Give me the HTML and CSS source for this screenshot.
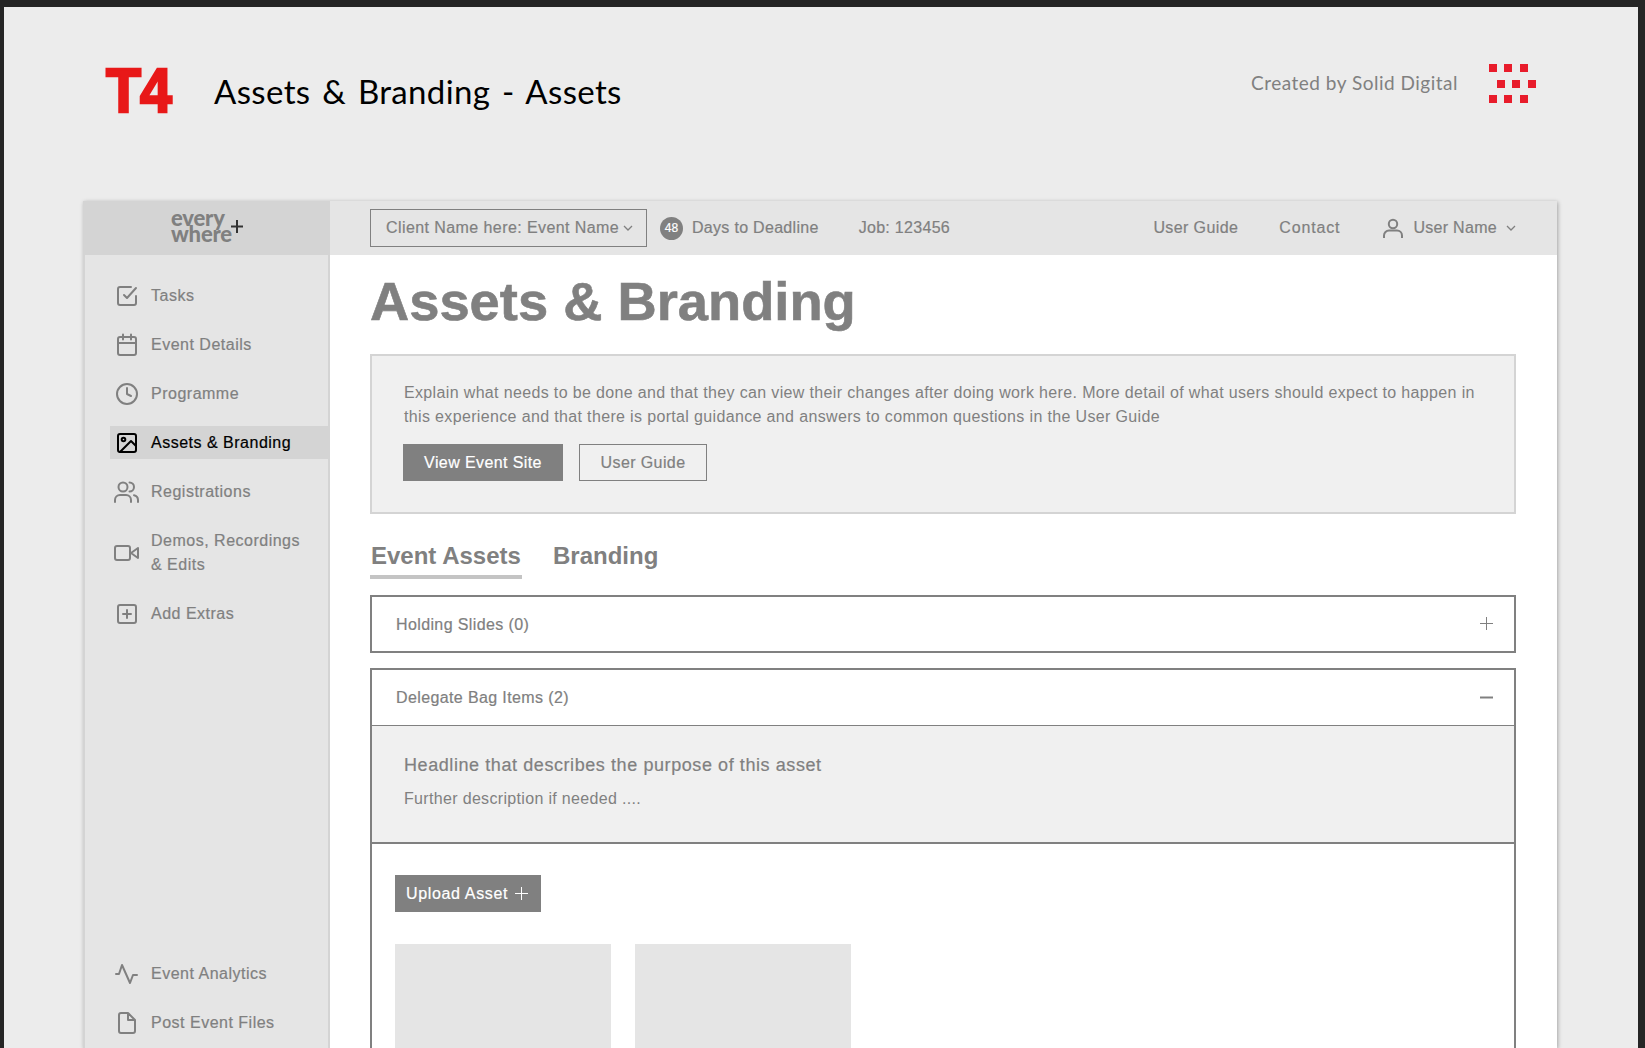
FILE: index.html
```html
<!DOCTYPE html>
<html lang="en">
<head>
<meta charset="utf-8">
<title>Assets &amp; Branding - Assets</title>
<link rel="stylesheet" href="styles.css">
</head>
<body>
<div class="canvas">
  <header class="doc-head">
    <div class="t4">T4</div>
    <h2 class="doc-title">Assets &amp; Branding - Assets</h2>
    <div class="credit">Created by Solid Digital</div>
    <svg class="dots" width="47" height="39" viewBox="0 0 47 39" fill="#e81c2b">
      <rect x="0" y="0" width="8" height="8"/><rect x="15" y="0" width="8" height="8"/><rect x="31" y="0" width="8" height="8"/>
      <rect x="8" y="16" width="8" height="8"/><rect x="23" y="16" width="8" height="8"/><rect x="39" y="16" width="8" height="8"/>
      <rect x="0" y="31" width="8" height="8"/><rect x="15" y="31" width="8" height="8"/><rect x="31" y="31" width="8" height="8"/>
    </svg>
  </header>

  <div class="app">
    <div class="brand">
      <div class="brand-mark">every<br>where<svg class="brand-plus" width="12" height="13" viewBox="0 0 12 13"><path d="M6 0v13M0 6.500h12"/></svg></div>
    </div>
    <div class="topbar">
      <div class="select">Client Name here: Event Name
        <svg class="chev" width="10" height="6" viewBox="0 0 10 6"><path d="M1 1l4 4 4-4"/></svg>
      </div>
      <span class="badge">48</span>
      <span class="deadline">Days to Deadline</span>
      <span class="job">Job: 123456</span>
      <span class="toplink guide">User Guide</span>
      <span class="toplink contact">Contact</span>
      <svg class="user-icon" width="20" height="21" viewBox="0 0 20 21"><circle cx="10" cy="6" r="4.2"/><path d="M1 20v-2.500a5 5 0 0 1 5-5h8a5 5 0 0 1 5 5V20"/></svg>
      <span class="toplink username">User Name</span>
      <svg class="chev chev-user" width="10" height="6" viewBox="0 0 10 6"><path d="M1 1l4 4 4-4"/></svg>
    </div>

    <nav class="sidebar">
      <ul class="nav">
        <li class="nav-item"><svg class="ico" viewBox="0 0 24 24"><path d="M9 11l3 3 9-10"/><path d="M21 12v7a2 2 0 0 1-2 2H5a2 2 0 0 1-2-2V5a2 2 0 0 1 2-2h11"/></svg><span>Tasks</span></li>
        <li class="nav-item"><svg class="ico" viewBox="0 0 24 24"><rect x="3" y="4" width="18" height="18" rx="2"/><path d="M16 1.500v5M8 1.500v5M3 10h18"/></svg><span>Event Details</span></li>
        <li class="nav-item"><svg class="ico" viewBox="0 0 24 24"><circle cx="12" cy="12" r="10"/><path d="M12 6v6l4 2"/></svg><span>Programme</span></li>
        <li class="nav-item active"><svg class="ico" viewBox="0 0 24 24"><rect x="3" y="3" width="18" height="18" rx="2"/><circle cx="8.500" cy="8.500" r="1.800"/><path d="M21 15l-5-5L5 21"/></svg><span>Assets &amp; Branding</span></li>
        <li class="nav-item"><svg class="ico ico-wide" viewBox="0 0 26 24"><circle cx="10" cy="7" r="4.500"/><path d="M2 22v-2a5 5 0 0 1 5-5h6a5 5 0 0 1 5 5v2M16.500 2.500a4.500 4.500 0 0 1 0 9M21 15.200a5 5 0 0 1 4 4.800v2"/></svg><span>Registrations</span></li>
        <li class="nav-item"><svg class="ico ico-wide" viewBox="0 0 26 24"><rect x="2" y="5" width="15" height="14" rx="2"/><path d="M25 7l-7 5 7 5z"/></svg><span>Demos, Recordings<br>&amp; Edits</span></li>
        <li class="nav-item"><svg class="ico" viewBox="0 0 24 24"><rect x="3" y="3" width="18" height="18" rx="2"/><path d="M12 8v8M8 12h8"/></svg><span>Add Extras</span></li>
      </ul>
      <ul class="nav">
        <li class="nav-item"><svg class="ico ico-wide" viewBox="0 0 26 24"><path d="M3 12h3l3-9 8 18 3-8h4"/></svg><span>Event Analytics</span></li>
        <li class="nav-item"><svg class="ico" viewBox="0 0 24 24"><path d="M13 2H6a2 2 0 0 0-2 2v16a2 2 0 0 0 2 2h12a2 2 0 0 0 2-2V9zM13 2v7h7"/></svg><span>Post Event Files</span></li>
      </ul>
    </nav>

    <main class="main">
      <h1 class="page-title">Assets &amp; Branding</h1>
      <section class="intro">
        <p class="intro-text">Explain what needs to be done and that they can view their changes after doing work here. More detail of what users should expect to happen in this experience and that there is portal guidance and answers to common questions in the User Guide</p>
        <div class="intro-actions">
          <span class="btn btn-solid">View Event Site</span>
          <span class="btn btn-outline">User Guide</span>
        </div>
      </section>

      <div class="tabs">
        <span class="tab tab-on">Event Assets</span>
        <span class="tab">Branding</span>
      </div>

      <div class="acc">
        <div class="acc-head"><span>Holding Slides (0)</span>
          <svg class="acc-icon" width="13" height="13" viewBox="0 0 13 13"><path d="M6.500 0v13M0 6.500h13"/></svg>
        </div>
      </div>

      <div class="acc acc-open">
        <div class="acc-head acc-head-open"><span>Delegate Bag Items (2)</span>
          <svg class="acc-icon acc-minus" width="13" height="13" viewBox="0 0 13 13"><path d="M0 6.500h13"/></svg>
        </div>
        <div class="acc-info">
          <h3 class="acc-info-title">Headline that describes the purpose of this asset</h3>
          <p class="acc-info-text">Further description if needed ....</p>
        </div>
        <div class="acc-body">
          <span class="upload">Upload Asset
            <svg class="upload-plus" width="13" height="13" viewBox="0 0 13 13"><path d="M6.500 0v13M0 6.500h13"/></svg>
          </span>
          <div class="tiles">
            <div class="tile"></div>
            <div class="tile"></div>
          </div>
        </div>
      </div>
    </main>
  </div>
</div>
</body>
</html>
```

FILE: styles.css
```css
* { box-sizing: border-box; }
html, body { margin: 0; height: 1048px; overflow: hidden; }
body {
  background: #252525;
  padding: 7px 7px 0 4px;
  font-family: "Liberation Sans", Arial, sans-serif;
  color: #808080;
}
.canvas { background: #ececec; height: 1041px; overflow: hidden; }

/* document header */
.doc-head {
  height: 194px;
  display: flex;
  align-items: flex-start;
  padding-left: 101px;
}
.t4 {
  margin-top: 59px;
  width: 67px;
  height: 48px;
  font-weight: 700;
  font-size: 63px;
  line-height: 48px;
  color: #e81818;
  letter-spacing: -1px;
  -webkit-text-stroke: 2.500px #e81818;
  transform: translateX(1px) scaleX(.91);
  transform-origin: left center;
}
.doc-title {
  margin: 63px 0 0 42px;
  font-family: Lato, sans-serif;
  font-weight: 400;
  font-size: 33px;
  line-height: 42px;
  color: #000;
  letter-spacing: .35px;
  word-spacing: 3px;
}
.credit {
  margin: 62px 0 0 auto;
  font-family: Lato, sans-serif;
  font-weight: 400;
  font-size: 19px;
  line-height: 28px;
  letter-spacing: .5px;
  color: #808080;
}
.dots { margin: 57px 102px 0 31px; flex: none; }

/* app frame */
.app {
  margin-left: 79px;
  width: 1474px;
  height: 847px;
  display: grid;
  grid-template-columns: 247px 1fr;
  grid-template-rows: 54px 1fr;
  background: #fff;
  box-shadow: 1px 1px 4px rgba(0,0,0,.3);
}
.brand {
  background: #d4d4d4;
  display: flex;
  align-items: center;
  justify-content: flex-start;
  padding: 0 0 5px 88px;
}
.brand-mark {
  font-family: Lato, sans-serif;
  font-weight: 900;
  font-size: 22px;
  line-height: 15.500px;
  letter-spacing: -.2px;
  color: #808080;
  position: relative;
}
.brand-plus {
  position: absolute;
  left: 60px;
  top: 10px;
  fill: none;
  stroke: #333;
  stroke-width: 2;
}
.topbar, .sidebar, .acc-head, .btn, .upload, .acc-info-title { -webkit-text-stroke: .2px currentColor; }
.topbar {
  background: #e5e5e5;
  display: flex;
  align-items: center;
  padding-left: 40px;
  font-size: 16px;
  letter-spacing: .3px;
}
.select {
  width: 277px;
  height: 38px;
  border: 1px solid #808080;
  display: flex;
  align-items: center;
  padding-left: 15px;
  white-space: nowrap;
  letter-spacing: .42px;
}
.chev { fill: none; stroke: #808080; stroke-width: 1.300; flex: none; }
.select .chev { margin-left: 4px; }
.badge {
  margin-left: 13px;
  width: 23px;
  height: 23px;
  border-radius: 50%;
  background: #808080;
  color: #fff;
  font-size: 12px;
  letter-spacing: 0;
  display: flex;
  align-items: center;
  justify-content: center;
}
.deadline { margin-left: 9px; }
.job { margin-left: 40px; }
.guide { margin-left: auto; letter-spacing: .4px; }
.contact { margin-left: 41px; letter-spacing: .85px; }
.user-icon { margin-left: 43px; fill: none; stroke: #808080; stroke-width: 2; flex: none; }
.username { margin-left: 10px; }
.chev-user { margin: 0 41px 0 9px; }

/* sidebar */
.sidebar {
  background: #e5e5e5;
  border-left: 2px solid #d4d4d4;
  border-right: 2px solid #d4d4d4;
  display: flex;
  flex-direction: column;
  justify-content: space-between;
  padding: 24px 0 9px;
}
.nav { list-style: none; margin: 0; padding: 0; display: flex; flex-direction: column; gap: 16px; }
.nav-item {
  display: flex;
  align-items: center;
  margin-left: 25px;
  padding: 4.500px 0 4.500px 5px;
  font-size: 16px;
  line-height: 24px;
  letter-spacing: .5px;
  white-space: nowrap;
}
.nav-item.active { background: #d4d4d4; color: #000; }
.ico {
  width: 24px;
  height: 24px;
  margin-right: 12px;
  flex: none;
  fill: none;
  stroke: #808080;
  stroke-width: 2;
  stroke-linecap: round;
  stroke-linejoin: round;
}
.ico-wide { width: 26px; margin: 0 12px 0 -2px; }
.active .ico { stroke: #000; }

/* main */
.main { padding: 0 41px 0 40px; overflow: hidden; }
.page-title {
  margin: 14px 0 19px;
  font-size: 54.300px;
  line-height: 66px;
  font-weight: 700;
  color: #808080;
  -webkit-text-stroke: .6px #808080;
}
.intro {
  height: 160px;
  background: #f0f0f0;
  border: 2px solid #d4d4d4;
  padding: 25px 31px 0;
}
.intro-text {
  margin: 0 0 0 1px;
  font-size: 16px;
  line-height: 24px;
  letter-spacing: .35px;
}
.intro-actions { margin-top: 15px; display: flex; gap: 16px; }
.btn {
  height: 37px;
  display: flex;
  align-items: center;
  justify-content: center;
  font-size: 16px;
  letter-spacing: .4px;
}
.btn-solid { width: 160px; background: #808080; color: #fff; }
.btn-outline { width: 128px; border: 1px solid #808080; }
.tabs { margin-top: 25px; display: flex; gap: 30px; }
.tab {
  font-size: 24px;
  font-weight: 700;
  line-height: 33px;
  height: 40px;
  padding-left: 1px;
}
.tab-on { border-bottom: 4px solid #c4c4c4; width: 152px; }
.acc { margin-top: 16px; border: 2px solid #808080; }
.acc-open { margin-top: 15px; border-bottom: 0; }
.acc-head {
  height: 54px;
  display: flex;
  align-items: center;
  justify-content: space-between;
  padding: 1px 21px 0 24px;
  font-size: 16px;
  letter-spacing: .38px;
}
.acc-head-open { height: 56px; border-bottom: 1px solid #808080; }
.acc-icon { fill: none; stroke: #808080; stroke-width: 1; flex: none; margin-top: -2px; }
.acc-minus { stroke-width: 2; }
.acc-info {
  height: 118px;
  background: #f0f0f0;
  border-bottom: 2px solid #808080;
  padding: 26px 31px 0;
}
.acc-info-title { margin: 0 0 0 1px; font-size: 18px; line-height: 26px; font-weight: 400; letter-spacing: .58px; }
.acc-info-text { margin: 9px 0 0 1px; font-size: 16px; line-height: 24px; letter-spacing: .33px; }
.acc-body { padding: 31px 23px 0; }
.upload {
  width: 146px;
  height: 37px;
  background: #808080;
  color: #fff;
  display: flex;
  align-items: center;
  padding-left: 11px;
  font-size: 16px;
  letter-spacing: .65px;
}
.upload-plus { margin-left: 7px; fill: none; stroke: #fff; stroke-width: 1; flex: none; }
.tiles { margin-top: 32px; display: flex; gap: 24px; }
.tile { width: 216px; height: 216px; background: #e5e5e5; }
```
